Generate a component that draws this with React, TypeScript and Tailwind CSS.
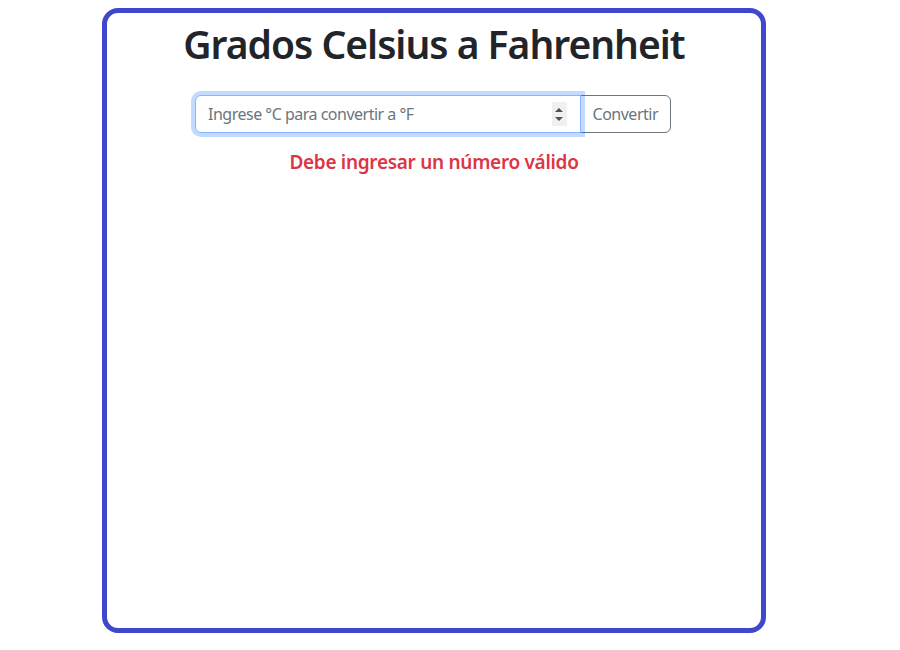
import React from "react";

export default function App() {
  return (
    <div className="w-[900px] h-[650px] bg-white" style={{ fontFamily: '"Noto Sans", "Open Sans", sans-serif' }}>
      <div className="ml-[102px] mt-2 w-[664px] h-[625px] border-[5px] border-[#3f48cc] rounded-[16px] flex flex-col items-center pt-[7px]">
        <h1 className="text-[39px] leading-[48px] font-semibold tracking-[-1px] text-[#212529] m-0">Grados Celsius a Fahrenheit</h1>
        <div className="mt-[27px] mr-[2px] flex w-[476px] h-[38px]">
          <div className="relative flex-1 min-w-0 z-10">
            <input
              type="text"
              autoFocus
              placeholder="Ingrese °C para convertir a °F"
              className="w-full h-[38px] pl-3 pr-10 text-[16px] tracking-[-0.5px] text-[#212529] placeholder:text-[#6c757d] border border-[#86b7fe] rounded-l-[6px] outline-none shadow-[0_0_0_4px_rgba(13,110,253,0.25)] bg-white"
            />
            <div className="absolute right-[14px] top-[7px] w-[15px] h-[24px] bg-[#f0f0f0] flex flex-col items-center justify-center gap-[5px]">
              <div className="w-0 h-0 border-l-[4px] border-r-[4px] border-b-[4px] border-l-transparent border-r-transparent border-b-[#505050]" />
              <div className="w-0 h-0 border-l-[4px] border-r-[4px] border-t-[4px] border-l-transparent border-r-transparent border-t-[#505050]" />
            </div>
          </div>
          <button className="-ml-px h-[38px] px-3 text-[16px] tracking-[-0.5px] text-[#6c757d] border border-[#6c757d] rounded-r-[6px] bg-white">Convertir</button>
        </div>
        <div className="mt-[17px] text-[19px] leading-[24px] font-semibold tracking-[-0.3px] text-[#dc3545]">Debe ingresar un número válido</div>
      </div>
    </div>
  );
}
